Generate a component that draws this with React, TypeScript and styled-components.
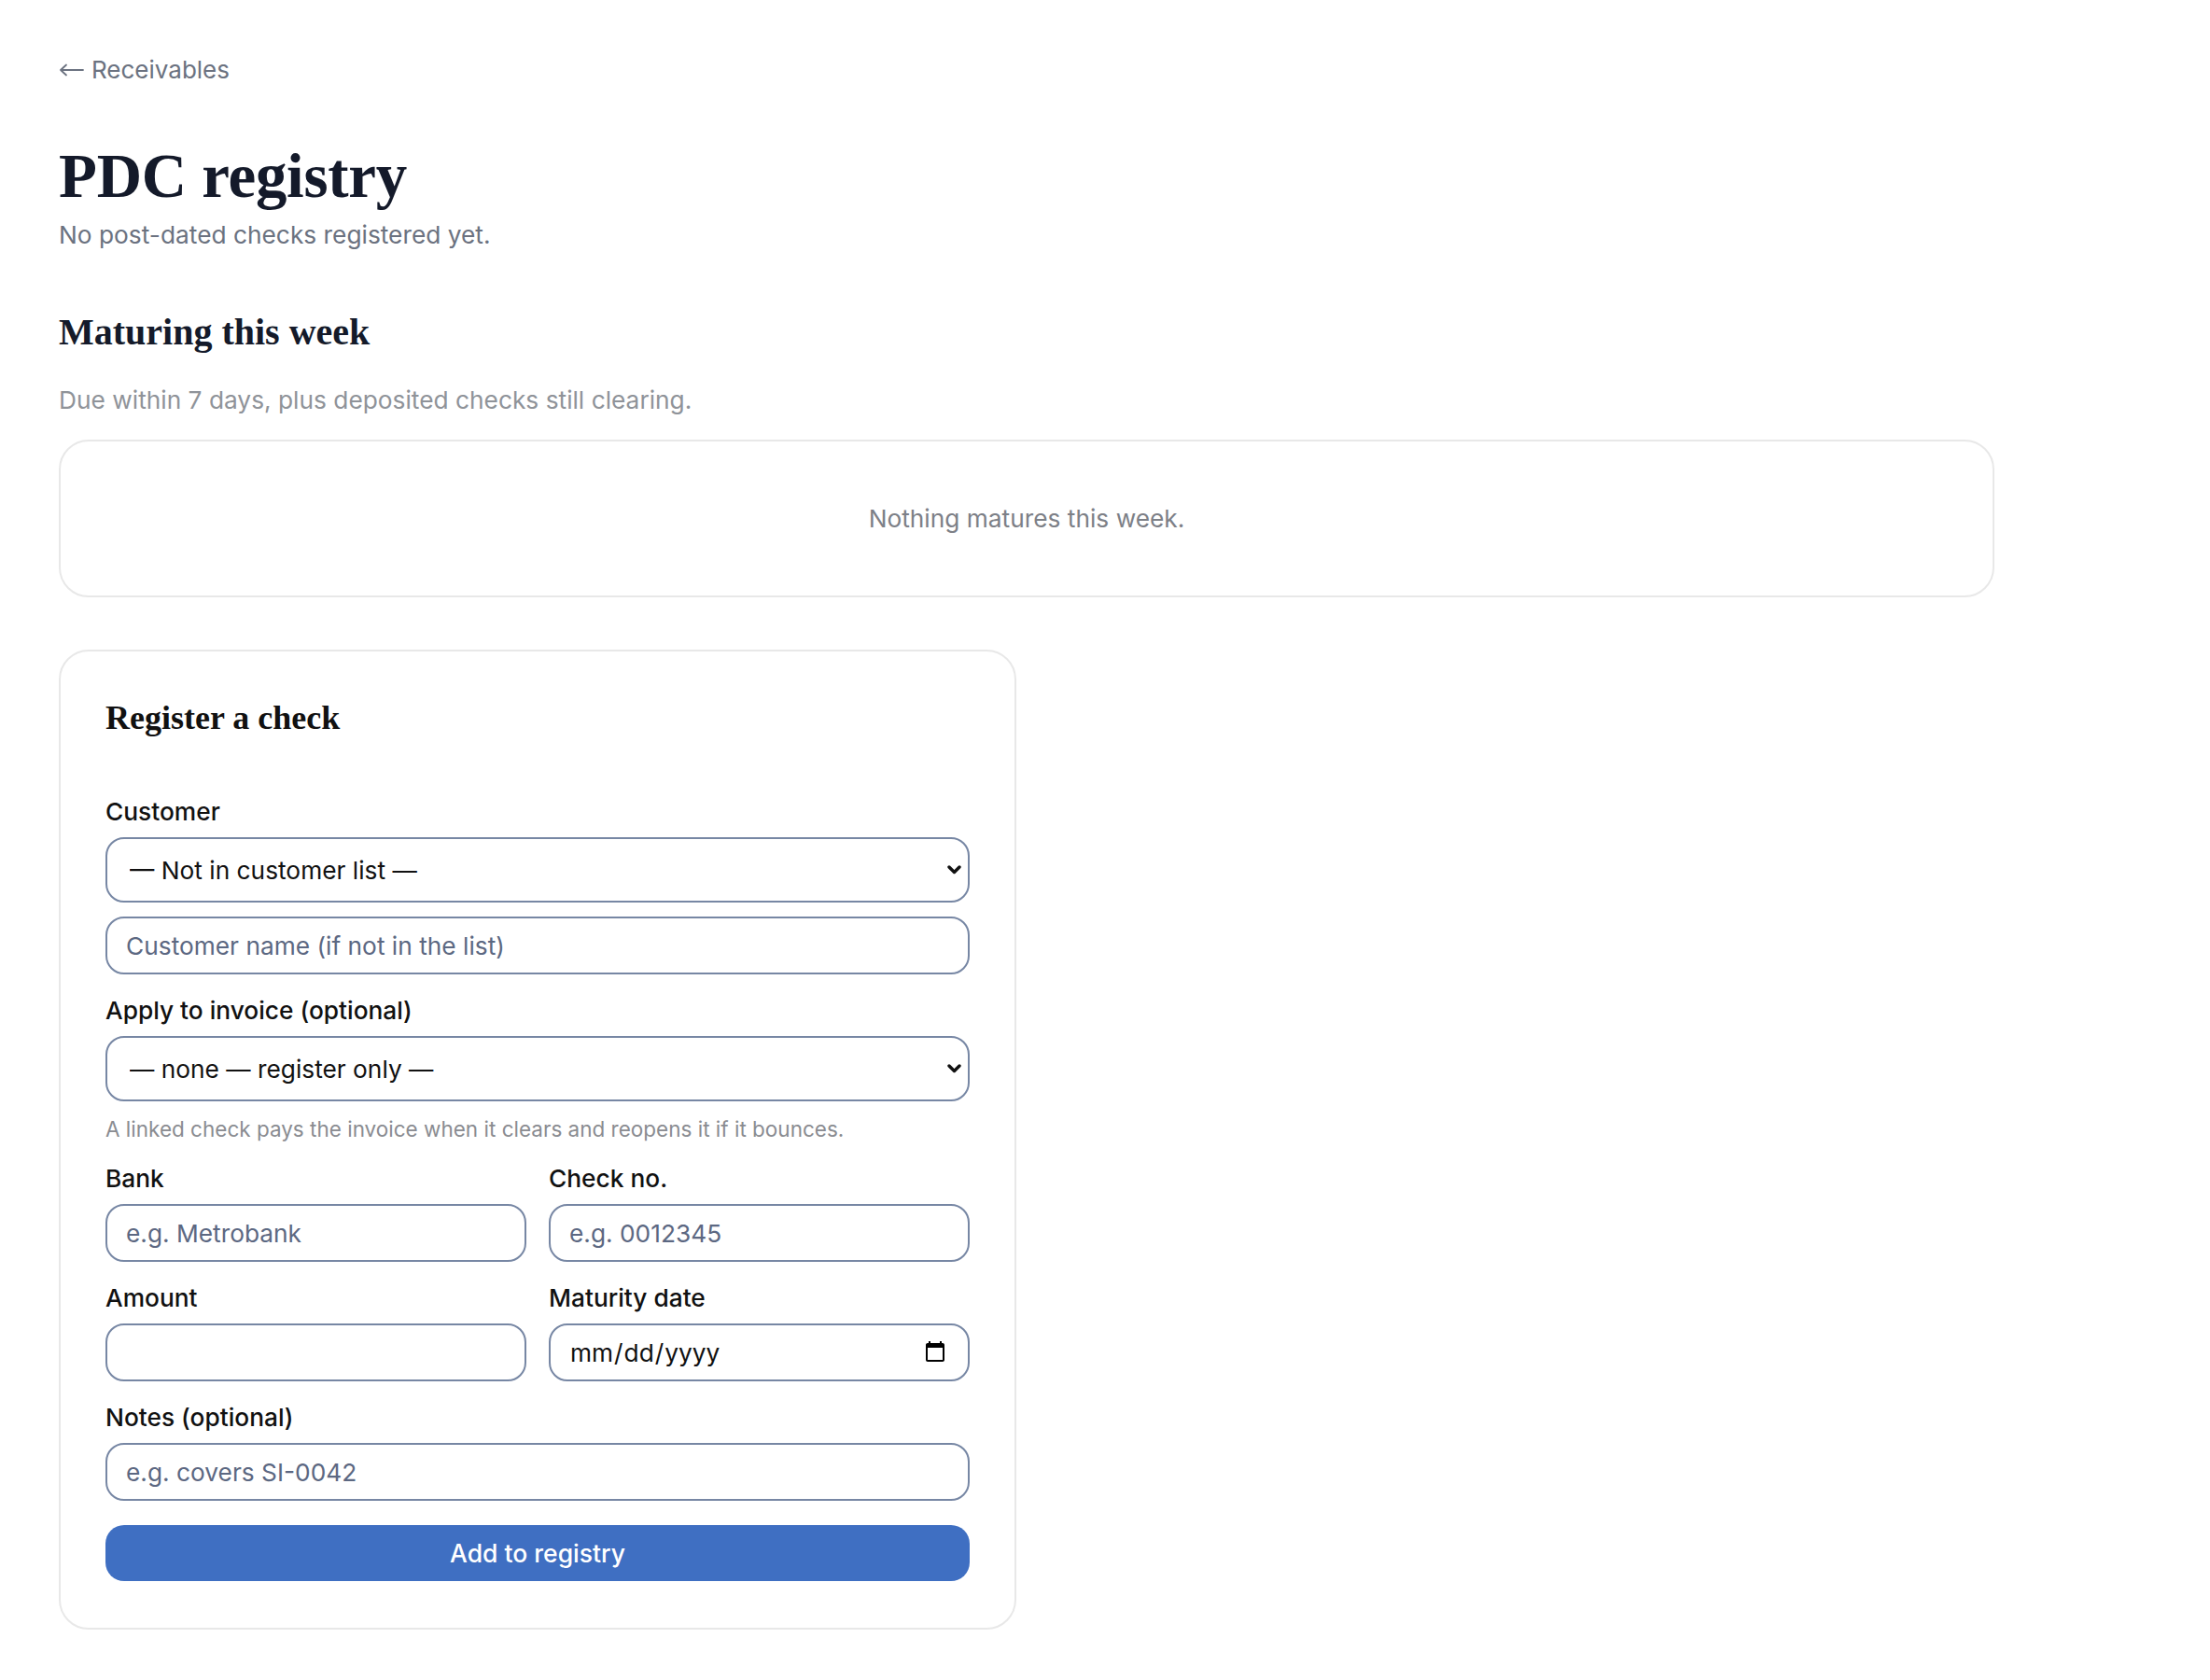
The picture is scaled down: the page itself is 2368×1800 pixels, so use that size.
import styled, { createGlobalStyle } from 'styled-components'

const GlobalStyle = createGlobalStyle`
  *, *::before, *::after {
    box-sizing: border-box;
  }

  body {
    margin: 0;
    background: #FFFFFF;
    font-family: 'Inter', 'Liberation Sans', sans-serif;
    color: #111827;
  }
`

const Page = styled.main`
  padding: 57px 0 80px 63px;
  max-width: 2137px;
`

const BackLink = styled.a`
  display: inline-flex;
  align-items: center;
  gap: 8px;
  font-size: 26px;
  line-height: 36px;
  color: #6B7280;
  text-decoration: none;
`

const Title = styled.h1`
  margin: 55px 0 0;
  font-family: 'Liberation Serif', serif;
  font-weight: 700;
  font-size: 67px;
  line-height: 80px;
  letter-spacing: -0.3px;
  color: #141A2A;
`

const Subtitle = styled.p`
  margin: 4px 0 0;
  font-size: 26.3px;
  line-height: 40px;
  color: #6B7280;
`

const SectionHeading = styled.h2`
  margin: 58px 0 0;
  font-family: 'Liberation Serif', serif;
  font-weight: 700;
  font-size: 40px;
  line-height: 52px;
  color: #141A2A;
`

const SectionNote = styled.p`
  margin: 27px 0 0;
  font-size: 26.3px;
  line-height: 40px;
  color: #8F9399;
`

const EmptyCard = styled.div`
  margin-top: 22px;
  height: 169px;
  display: flex;
  align-items: center;
  justify-content: center;
  border: 2px solid #E8E8E8;
  border-radius: 32px;
  font-size: 26.3px;
  color: #7D8087;
`

const FormCard = styled.section`
  margin-top: 56px;
  width: 1026px;
  padding: 48px 48px 50px;
  border: 2px solid #E8E8E8;
  border-radius: 32px;
`

const FormHeading = styled.h3`
  margin: 0 0 60px;
  font-family: 'Liberation Serif', serif;
  font-weight: 700;
  font-size: 36px;
  line-height: 46px;
  color: #111111;
`

const Form = styled.form`
  display: flex;
  flex-direction: column;
  gap: 21px;
`

const Row = styled.div`
  display: grid;
  grid-template-columns: 1fr 1fr;
  gap: 24px;
`

const Field = styled.div`
  display: flex;
  flex-direction: column;
`

const Label = styled.label`
  margin-bottom: 9px;
  font-size: 26.3px;
  line-height: 36px;
  font-weight: 500;
  color: #111111;
`

const controlBase = `
  width: 100%;
  border: 2px solid #7787A4;
  border-radius: 20px;
  background: #FFFFFF;
  font-family: 'Inter', 'Liberation Sans', sans-serif;
  font-size: 26.3px;
  color: #111111;
  outline: none;
`

const SelectWrap = styled.div`
  position: relative;
`

const Select = styled.select`
  ${controlBase}
  appearance: none;
  height: 70px;
  padding: 0 56px 0 24px;
`

// chevron sits over the right end of the select
const Chevron = styled.svg`
  position: absolute;
  right: 9px;
  top: 50%;
  width: 15px;
  height: 10px;
  margin-top: -5px;
  pointer-events: none;
`

const Input = styled.input<{ $stacked?: boolean }>`
  ${controlBase}
  height: 62px;
  padding: 0 20px;
  margin-top: ${({ $stacked }) => ($stacked ? '15px' : '0')};

  &::placeholder {
    color: #5C6882;
  }

  &::-webkit-datetime-edit {
    color: #111111;
  }
`

const Hint = styled.p`
  margin: -6px 0 -1px;
  font-size: 22.5px;
  line-height: 30px;
  color: #8A8C91;
`

const SubmitButton = styled.button`
  margin-top: 5px;
  height: 60px;
  border: none;
  border-radius: 20px;
  background: #3F6FC2;
  font-family: 'Inter', 'Liberation Sans', sans-serif;
  font-size: 26.5px;
  font-weight: 500;
  color: #FFFFFF;
  cursor: pointer;
`

const ArrowLeft = () => (
  <svg width="27" height="14" viewBox="0 0 27 14" fill="none">
    <path d="M26 7H2M8 1.5L2 7l6 5.5" stroke="#6B7280" strokeWidth="1.8" strokeLinecap="round" strokeLinejoin="round" />
  </svg>
)

const ChoiceSelect = ({ label }: { label: string }) => (
  <SelectWrap>
    <Select defaultValue="">
      <option value="">{label}</option>
    </Select>
    <Chevron viewBox="0 0 15 10" fill="none">
      <path d="M2 2l5.5 5.5L13 2" stroke="#111111" strokeWidth="3.4" strokeLinecap="round" strokeLinejoin="round" />
    </Chevron>
  </SelectWrap>
)

export default function App() {
  return (
    <>
      <GlobalStyle />
      <Page>
        <BackLink href="#">
          <ArrowLeft />
          Receivables
        </BackLink>
        <Title>PDC registry</Title>
        <Subtitle>No post-dated checks registered yet.</Subtitle>

        <SectionHeading>Maturing this week</SectionHeading>
        <SectionNote>Due within 7 days, plus deposited checks still clearing.</SectionNote>
        <EmptyCard>Nothing matures this week.</EmptyCard>

        <FormCard>
          <FormHeading>Register a check</FormHeading>
          <Form onSubmit={(e) => e.preventDefault()}>
            <Field>
              <Label>Customer</Label>
              <ChoiceSelect label="— Not in customer list —" />
              <Input $stacked placeholder="Customer name (if not in the list)" />
            </Field>

            <Field>
              <Label>Apply to invoice (optional)</Label>
              <ChoiceSelect label="— none — register only —" />
            </Field>
            <Hint>A linked check pays the invoice when it clears and reopens it if it bounces.</Hint>

            <Row>
              <Field>
                <Label>Bank</Label>
                <Input placeholder="e.g. Metrobank" />
              </Field>
              <Field>
                <Label>Check no.</Label>
                <Input placeholder="e.g. 0012345" />
              </Field>
            </Row>

            <Row>
              <Field>
                <Label>Amount</Label>
                <Input inputMode="decimal" />
              </Field>
              <Field>
                <Label>Maturity date</Label>
                <Input type="date" />
              </Field>
            </Row>

            <Field>
              <Label>Notes (optional)</Label>
              <Input placeholder="e.g. covers SI-0042" />
            </Field>

            <SubmitButton type="submit">Add to registry</SubmitButton>
          </Form>
        </FormCard>
      </Page>
    </>
  )
}
